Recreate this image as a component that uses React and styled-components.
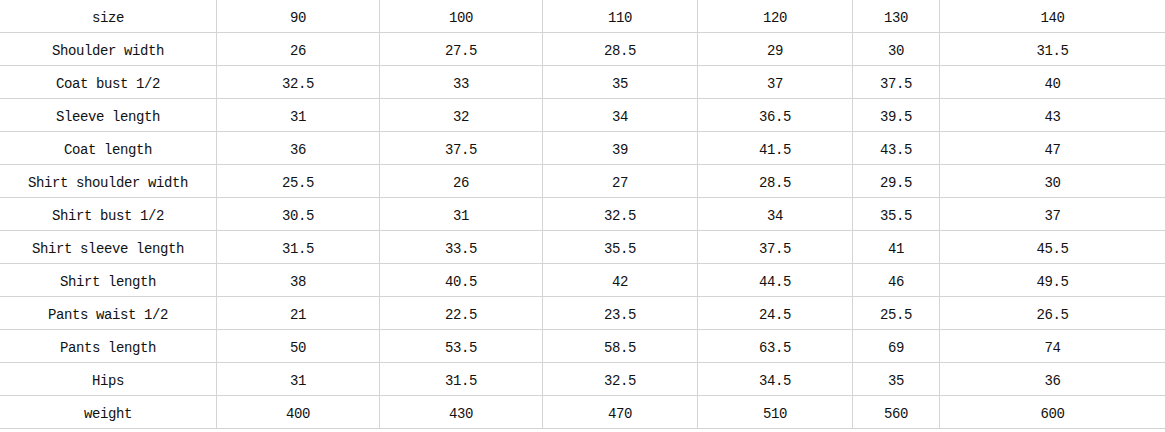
import React from "react";
import styled, { createGlobalStyle } from "styled-components";

const Global = createGlobalStyle`
  html, body { margin: 0; padding: 0; background: #fff; }
`;

const Grid = styled.div`
  display: grid;
  grid-template-columns: 217px 163px 163px 155px 155px 87px 225px;
  width: 1165px;
  font-family: "Liberation Mono", "DejaVu Sans Mono", monospace;
  font-size: 14px;
  letter-spacing: -0.4px;
  color: #111;
`;

const Cell = styled.div`
  box-sizing: border-box;
  height: 33px;
  display: flex;
  align-items: center;
  justify-content: center;
  padding-top: 3px;
  border-bottom: 1px solid #d4d4d4;
  border-right: ${(p) => (p.$last ? "none" : "1px solid #d4d4d4")};
  white-space: nowrap;
`;

const rows = [
  ["size", "90", "100", "110", "120", "130", "140"],
  ["Shoulder width", "26", "27.5", "28.5", "29", "30", "31.5"],
  ["Coat bust 1/2", "32.5", "33", "35", "37", "37.5", "40"],
  ["Sleeve length", "31", "32", "34", "36.5", "39.5", "43"],
  ["Coat length", "36", "37.5", "39", "41.5", "43.5", "47"],
  ["Shirt shoulder width", "25.5", "26", "27", "28.5", "29.5", "30"],
  ["Shirt bust 1/2", "30.5", "31", "32.5", "34", "35.5", "37"],
  ["Shirt sleeve length", "31.5", "33.5", "35.5", "37.5", "41", "45.5"],
  ["Shirt length", "38", "40.5", "42", "44.5", "46", "49.5"],
  ["Pants waist 1/2", "21", "22.5", "23.5", "24.5", "25.5", "26.5"],
  ["Pants length", "50", "53.5", "58.5", "63.5", "69", "74"],
  ["Hips", "31", "31.5", "32.5", "34.5", "35", "36"],
  ["weight", "400", "430", "470", "510", "560", "600"],
];

export default function App() {
  return (
    <>
      <Global />
      <Grid>
        {rows.map((r, i) =>
          r.map((c, j) => (
            <Cell key={`${i}-${j}`} $last={j === r.length - 1}>
              {c}
            </Cell>
          ))
        )}
      </Grid>
    </>
  );
}
